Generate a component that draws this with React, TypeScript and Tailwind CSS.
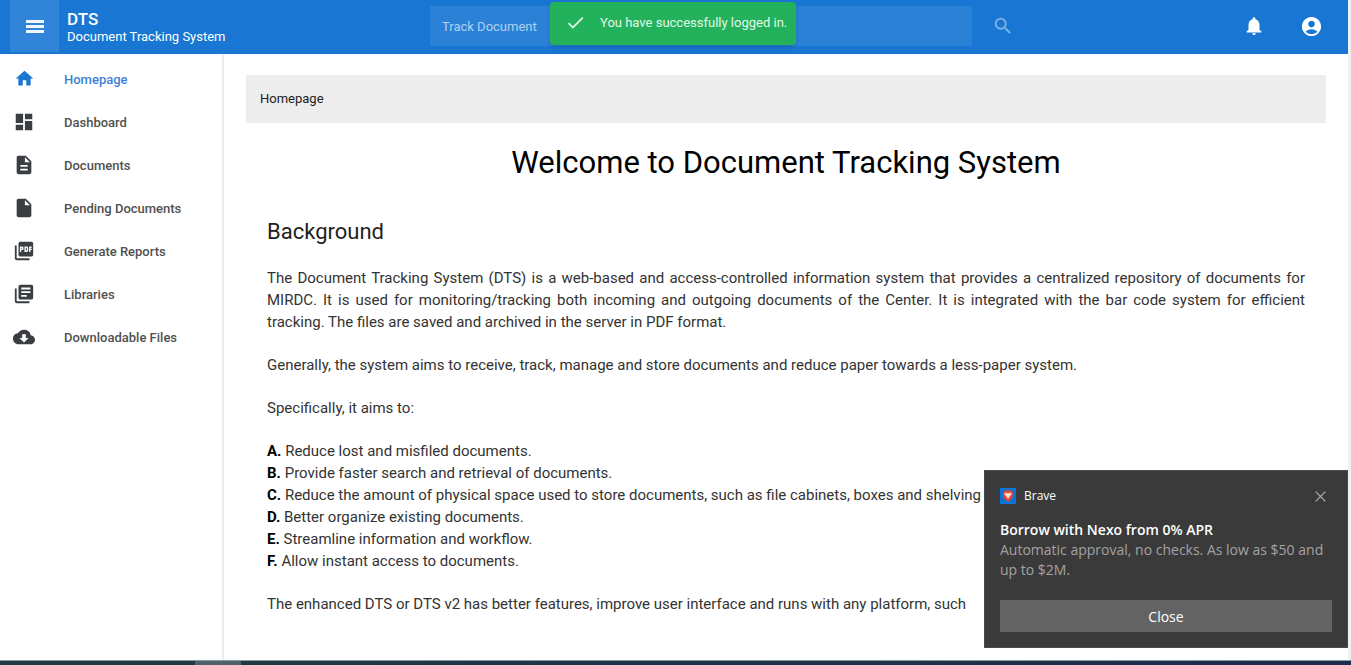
import type { ReactNode } from "react";
import {
  MdHome,
  MdDashboard,
  MdDescription,
  MdInsertDriveFile,
  MdPictureAsPdf,
  MdLibraryBooks,
  MdCloudDownload,
  MdSearch,
  MdNotifications,
  MdAccountCircle,
  MdCheck,
} from "react-icons/md";

const links: { label: string; icon: ReactNode; active?: boolean }[] = [
  { label: "Homepage", icon: <MdHome size={21} />, active: true },
  { label: "Dashboard", icon: <MdDashboard size={22} /> },
  { label: "Documents", icon: <MdDescription size={22} /> },
  { label: "Pending Documents", icon: <MdInsertDriveFile size={22} /> },
  { label: "Generate Reports", icon: <MdPictureAsPdf size={22} /> },
  { label: "Libraries", icon: <MdLibraryBooks size={22} /> },
  { label: "Downloadable Files", icon: <MdCloudDownload size={22} /> },
];

const aims = [
  "Reduce lost and misfiled documents.",
  "Provide faster search and retrieval of documents.",
  "Reduce the amount of physical space used to store documents, such as file cabinets, boxes and shelving",
  "Better organize existing documents.",
  "Streamline information and workflow.",
  "Allow instant access to documents.",
];

function MenuIcon() {
  return (
    <svg width="18" height="13" viewBox="0 0 18 13" fill="#f1f7fd" aria-hidden="true">
      <rect width="18" height="3" />
      <rect y="5" width="18" height="3" />
      <rect y="10" width="18" height="3" />
    </svg>
  );
}

function Header() {
  return (
    <header className="flex h-[54px] items-stretch bg-[#1976d2] pb-[2px] text-white">
      <button
        type="button"
        aria-label="Toggle menu"
        className="ml-[10px] flex w-[49px] items-center justify-center bg-[#3185d8]"
      >
        <MenuIcon />
      </button>
      <div className="flex w-[371px] shrink-0 flex-col justify-center pt-[2px] pl-2">
        <div className="text-[17px] leading-[20px] font-medium">DTS</div>
        <div className="text-[13px] leading-[16px]">Document Tracking System</div>
      </div>
      <form className="flex items-center" onSubmit={(e) => e.preventDefault()}>
        <input
          type="text"
          aria-label="Track Document"
          placeholder="Track Document"
          className="h-[40px] w-[542px] bg-[#2b81d6] px-3 text-[13px] text-white outline-none placeholder:text-[#b0d0f0] placeholder:opacity-100"
        />
        <button type="submit" aria-label="Search" className="ml-5 p-0 text-[#81b3e6]">
          <MdSearch size={22} />
        </button>
      </form>
      <div className="flex flex-1 items-center justify-end gap-[35px] pr-[25px]">
        <button type="button" aria-label="Notifications">
          <MdNotifications size={22} />
        </button>
        <button type="button" aria-label="Account">
          <MdAccountCircle size={23} />
        </button>
      </div>
    </header>
  );
}

function Sidebar() {
  return (
    <nav className="w-[224px] shrink-0 border-r-2 border-[#ececec] pt-1">
      <ul>
        {links.map((l) => (
          <li key={l.label}>
            <a
              href="#"
              className={
                l.active
                  ? "flex h-[43px] items-center text-[13px] font-medium text-[#3f7fd6]"
                  : "flex h-[43px] items-center text-[13px] font-medium text-[#505050]"
              }
            >
              <span
                className={
                  l.active
                    ? "flex w-12 justify-center pb-[2px] text-[#1976d2]"
                    : "flex w-12 justify-center pb-[2px] text-[#3a3d42]"
                }
              >
                {l.icon}
              </span>
              <span className="pl-4">{l.label}</span>
            </a>
          </li>
        ))}
      </ul>
    </nav>
  );
}

function Content() {
  return (
    <main className="min-w-0 flex-1 px-[22px] pt-[21px]">
      <div className="flex h-12 items-center bg-[#ededed] px-[14px] text-[13px] text-[#222]">
        Homepage
      </div>
      <h1 className="mt-5 text-center text-[31px] leading-[40px] text-black">
        Welcome to Document Tracking System
      </h1>
      <section className="px-[21px] text-[15px] leading-[22px] text-[#333]">
        <h2 className="mt-8 text-[22px] leading-[34px] text-[#222]">Background</h2>
        <div className="mt-[18px] flex flex-col gap-[21px]">
          <p className="text-justify">
            The Document Tracking System (DTS) is a web-based and access-controlled information
            system that provides a centralized repository of documents for MIRDC. It is used for
            monitoring/tracking both incoming and outgoing documents of the Center. It is
            integrated with the bar code system for efficient tracking. The files are saved and
            archived in the server in PDF format.
          </p>
          <p>
            Generally, the system aims to receive, track, manage and store documents and reduce
            paper towards a less-paper system.
          </p>
          <p>Specifically, it aims to:</p>
          <ul>
            {aims.map((a, i) => (
              <li key={a}>
                <b className="font-bold text-black">{"ABCDEF"[i]}.</b> {a}
              </li>
            ))}
          </ul>
          <p>
            The enhanced DTS or DTS v2 has better features, improve user interface and runs with
            any platform, such
          </p>
        </div>
      </section>
    </main>
  );
}

function SuccessToast() {
  return (
    <div className="absolute inset-x-0 top-[2px] flex justify-center pr-[5px]">
      <div
        role="status"
        className="flex h-[43px] w-[246px] items-center rounded-[4px] bg-[#23b25b] pb-[2px] pl-[15px] text-[13px] text-[#e2f8ea] shadow-md"
      >
        <MdCheck size={21} />
        <span className="pl-[14px] whitespace-nowrap">You have successfully logged in.</span>
      </div>
    </div>
  );
}

function BraveLogo() {
  return (
    <svg width="16" height="16" viewBox="0 0 16 16" aria-hidden="true">
      <rect width="16" height="16" fill="#0a74d6" />
      <path d="M5.300 2.200h5.400l2.300 2.300-.8 5.400L8 14 3.800 9.900 3 4.500z" fill="#f0452a" />
      <path d="M4.800 4.800l1.900.3h2.600l1.900-.3.300 1.500-2 2.500L8 10.900 6.500 8.800l-2-2.500z" fill="#fbdcd4" />
    </svg>
  );
}

function DesktopNotification() {
  return (
    <aside className="absolute right-[3px] bottom-[17px] w-[364px] border border-[#4a4a4a] bg-[#3a3a3a] p-[15px] font-['Open_Sans',sans-serif]">
      <div className="mt-px flex items-center text-[12px] leading-[18px] text-white">
        <BraveLogo />
        <span className="flex-1 pl-2">Brave</span>
        <button type="button" aria-label="Dismiss" className="mr-[6px] text-[#b0b0b0]">
          <svg width="11" height="11" viewBox="0 0 11 11" stroke="currentColor" strokeWidth="1.200">
            <path d="M.7.7l9.600 9.600M10.300.7L.7 10.300" />
          </svg>
        </button>
      </div>
      <div className="mt-[15px] text-[14px] leading-[20px] font-semibold text-white">
        Borrow with Nexo from 0% APR
      </div>
      <p className="text-[14px] leading-[20px] text-[#a3a3a3]">
        Automatic approval, no checks. As low as $50 and up to $2M.
      </p>
      <button type="button" className="mt-5 h-8 w-full bg-[#636363] text-[14px] text-white">
        Close
      </button>
    </aside>
  );
}

export default function App() {
  return (
    <div className="relative flex h-screen flex-col overflow-hidden bg-white font-[Roboto,sans-serif]">
      <div className="flex min-h-0 flex-1">
        <div className="flex min-w-0 flex-1 flex-col">
          <Header />
          <div className="flex min-h-0 flex-1">
            <Sidebar />
            <Content />
          </div>
        </div>
        <div className="w-[3px] shrink-0 bg-[#f0f0f0]" />
      </div>
      <div className="flex h-[5px] shrink-0 border-t border-[#8a9a9e] bg-linear-to-r from-[#213a44] to-[#1b2c4c]">
        <div className="ml-[195px] w-[46px] bg-[#4e626a]" />
      </div>
      <SuccessToast />
      <DesktopNotification />
    </div>
  );
}
